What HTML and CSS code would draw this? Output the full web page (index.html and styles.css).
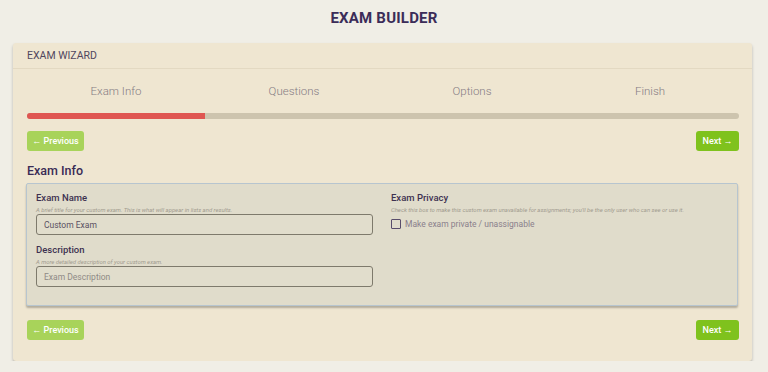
FILE: index.html
```html
<!DOCTYPE html>
<html>

<head>
	<title>Exam Builder</title>
	<meta charset="utf-8">
	<meta name="viewport" content="width=device-width, initial-scale=1.0">
	<link rel="stylesheet" href="styles.css">
</head>

<body>

	<header>
		<h1 class="titel">EXAM BUILDER</h1>
	</header>

	<main class="kort">
		<div class="kort-top">EXAM WIZARD</div>

		<section class="kort-indhold">
			<nav class="trin">
				<span class="trin-punkt">Exam Info</span>
				<span class="trin-punkt">Questions</span>
				<span class="trin-punkt">Options</span>
				<span class="trin-punkt">Finish</span>
			</nav>
			<div class="fremskridt">
				<div class="fremskridt-fyld" style="width: 25%"></div>
			</div>

			<div class="knapper">
				<button class="knap forrige">&larr; Previous</button>
				<button class="knap naeste">Next &rarr;</button>
			</div>

			<h2 class="afsnit">Exam Info</h2>

			<div class="panel">
				<div class="kolonne">
					<label class="felt-navn" for="navn">Exam Name</label>
					<p class="hjaelp">A brief title for your custom exam. This is what will appear in lists and results.</p>
					<input class="felt" id="navn" type="text" value="Custom Exam">

					<label class="felt-navn" for="beskrivelse">Description</label>
					<p class="hjaelp">A more detailed description of your custom exam.</p>
					<input class="felt" id="beskrivelse" type="text" placeholder="Exam Description">
				</div>
				<div class="kolonne">
					<span class="felt-navn">Exam Privacy</span>
					<p class="hjaelp">Check this box to make this custom exam unavailable for assignments; you'll be the only user who can see or use it.</p>
					<label class="afkryds"><span class="boks"></span>Make exam private / unassignable</label>
				</div>
			</div>

			<div class="knapper nederst">
				<button class="knap forrige">&larr; Previous</button>
				<button class="knap naeste">Next &rarr;</button>
			</div>
		</section>
	</main>

</body></html>
```

FILE: styles.css
```css
body {
	margin: 0;
	padding: 0;
	background-color: #f0eee6;
	font-family: Roboto, "Liberation Sans", sans-serif;
}

header {
	height: 43px;
	display: flex;
	align-items: center;
	justify-content: center;
}

.titel {
	margin: 0;
	font-size: 15px;
	font-weight: 700;
	color: #3b2c58;
	letter-spacing: 0.2px;
	position: relative;
	top: -4px;
}

.kort {
	margin: 0 16px 0 13px;
	background-color: #efe6d1;
	border-radius: 3px;
	box-shadow: 0 2px 3px rgba(0, 0, 0, 0.25);
	padding-bottom: 21px;
}

.kort-top {
	height: 25px;
	line-height: 25px;
	padding-left: 14px;
	font-size: 10.5px;
	color: #51465e;
	border-bottom: 1px solid #e3d9c2;
}

.kort-indhold {
	padding: 0 13px 0 14px;
}

.trin {
	display: grid;
	grid-template-columns: repeat(4, 1fr);
	height: 44px;
	align-items: center;
}

.trin-punkt {
	text-align: center;
	font-size: 11.5px;
	font-weight: 300;
	color: #857c84;
}

.fremskridt {
	height: 6px;
	background-color: #cdc4ae;
	border-radius: 3px;
	overflow: hidden;
}

.fremskridt-fyld {
	height: 100%;
	background-color: #df5651;
}

.knapper {
	display: flex;
	justify-content: space-between;
	margin-top: 12px;
}

.nederst {
	margin-top: 14px;
}

.knap {
	height: 20px;
	border: none;
	border-radius: 3px;
	color: #ffffff;
	font-family: Roboto, "Liberation Sans", sans-serif;
	font-size: 9px;
	font-weight: 500;
	padding: 0;
	white-space: nowrap;
}

.forrige {
	background-color: #a8d35a;
	width: 57px;
}

.naeste {
	background-color: #7fc21d;
	width: 43px;
}

.afsnit {
	margin: 12px 0 0 0;
	font-size: 12.5px;
	font-weight: 500;
	color: #392b55;
	height: 20px;
	line-height: 16px;
}

.panel {
	background-color: #e0dccb;
	border: 1px solid #b7c5cf;
	border-radius: 2px;
	box-shadow: 0 2px 2px rgba(0, 0, 0, 0.25);
	display: grid;
	grid-template-columns: 1fr 1fr;
	column-gap: 18px;
	padding: 8px 9px 18px 9px;
	margin-right: 1px;
	margin-left: -1px;
}

.felt-navn {
	display: block;
	font-size: 9.5px;
	font-weight: 500;
	color: #3d3150;
	height: 12px;
	line-height: 12px;
}

.hjaelp {
	margin: 2px 0 0 0;
	font-size: 5.9px;
	font-style: italic;
	color: #a19b8f;
	height: 8px;
	line-height: 8px;
}

.felt {
	display: block;
	box-sizing: border-box;
	width: 100%;
	height: 21px;
	margin: 0 0 9px 0;
	border: 1px solid #7e7a6c;
	border-radius: 3px;
	background-color: #e1ddcc;
	padding: 0 7px;
	font-family: Roboto, "Liberation Sans", sans-serif;
	font-size: 8.5px;
	color: #5a5062;
}

.felt:last-child {
	margin-bottom: 0;
}

.felt::placeholder {
	color: #8f8a86;
}

.afkryds {
	display: flex;
	align-items: center;
	gap: 4px;
	font-size: 8.5px;
	color: #8a7f8c;
	margin-top: 5px;
}

.boks {
	width: 8px;
	height: 8px;
	border: 1px solid #594d6b;
	border-radius: 1px;
}
```
